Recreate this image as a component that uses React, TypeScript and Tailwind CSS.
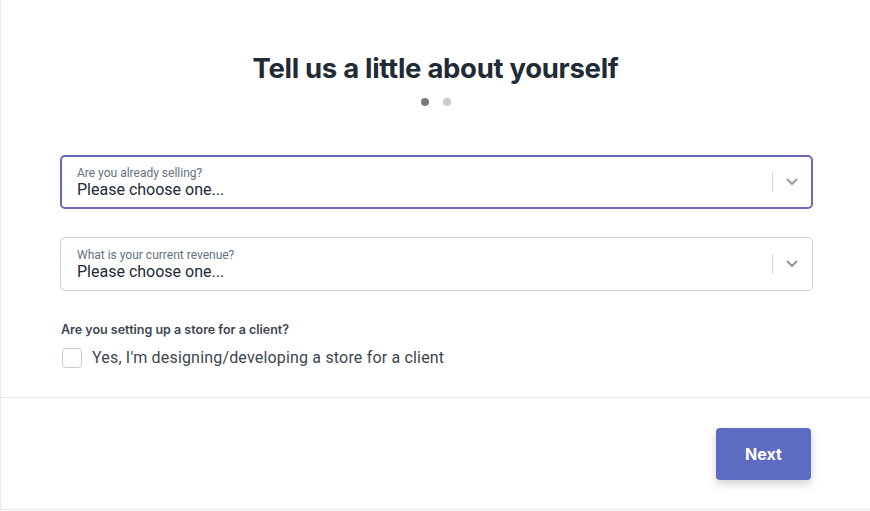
import React from "react";

const SelectField = ({ label, focused }: { label: string; focused?: boolean }) => (
  <div
    className={`flex h-[54px] items-center rounded-[5px] bg-white ${
      focused ? "border-2 border-[#6a6bb7] pl-[15px] pr-[1px]" : "border border-[#c9ced6] pl-[16px] pr-[2px]"
    }`}
  >
    <div className="flex flex-1 flex-col pt-[1px] font-['Roboto',sans-serif]">
      <span className="text-[12px] leading-[14px] text-[#637381]">{label}</span>
      <span className="text-[16px] leading-[19px] text-[#212b36]">Please choose one...</span>
    </div>
    <div className="h-[20px] w-px bg-[#d3d8de]" />
    <div className="flex w-[37px] items-center justify-center">
      <svg width="12" height="8" viewBox="0 0 12 8" fill="none">
        <path d="M1.5 1.5 6 6l4.5-4.5" stroke="#8f98a3" strokeWidth="2" strokeLinecap="round" strokeLinejoin="round" />
      </svg>
    </div>
  </div>
);

export default function App() {
  return (
    <div className="h-[511px] w-[870px] bg-white font-['Inter',sans-serif] text-[#212b36]">
      <div className="flex h-[510px] flex-col border-b border-l border-[#e6e8eb]">
        {/* Header */}
        <div className="flex flex-col items-center pt-[51px]">
          <h1 className="text-[27.5px] font-bold leading-[34px] tracking-[-0.3px]">Tell us a little about yourself</h1>
          <div className="mt-[13px] flex gap-[14px]">
            <span className="h-[8px] w-[8px] rounded-full bg-[#777b80]" />
            <span className="h-[8px] w-[8px] rounded-full bg-[#c9ccd0]" />
          </div>
        </div>

        {/* Form */}
        <div className="flex flex-col pl-[59px] pr-[57px] pt-[49px]">
          <SelectField label="Are you already selling?" focused />
          <div className="mt-[28px]">
            <SelectField label="What is your current revenue?" />
          </div>
          <p className="mt-[31px] pl-[1px] text-[12.5px] font-semibold leading-[16px] text-[#3d4650]">
            Are you setting up a store for a client?
          </p>
          <label className="mt-[10px] flex items-center gap-[10px] pl-[2px]">
            <span className="h-[20px] w-[20px] rounded-[4px] border border-[#c4cdd5] bg-white" />
            <span className="font-['Roboto',sans-serif] text-[16px] leading-[20px] tracking-[0.18px] text-[#3d4650]">
              Yes, I'm designing/developing a store for a client
            </span>
          </label>
        </div>

        {/* Footer */}
        <div className="mt-auto flex h-[112px] justify-end border-t border-[#e6e8eb] pr-[59px] pt-[30px]">
          <button className="h-[52px] w-[95px] rounded-[4px] bg-[#5e6bc2] text-[16px] font-bold text-white shadow-[0_4px_10px_rgba(0,0,0,0.18)]">
            Next
          </button>
        </div>
      </div>
    </div>
  );
}
